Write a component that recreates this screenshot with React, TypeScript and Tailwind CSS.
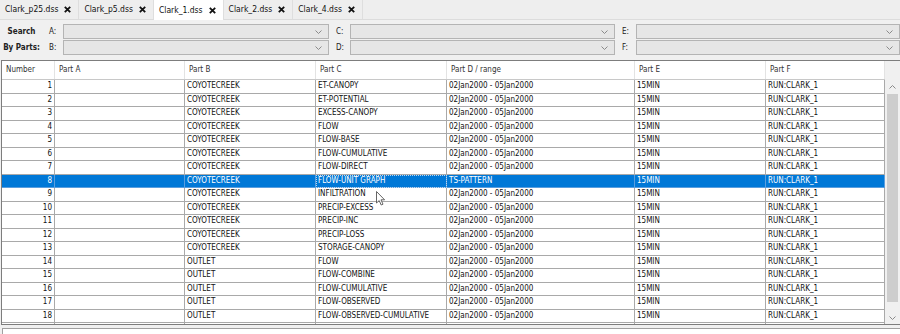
import React from 'react';

type Row = { b: string; c: string; d: string };

const tabs = ['Clark_p25.dss', 'Clark_p5.dss', 'Clark_1.dss', 'Clark_2.dss', 'Clark_4.dss'];
const activeTab = 2;

const RANGE = '02Jan2000 - 05Jan2000';

const rows: Row[] = [
  { b: 'COYOTECREEK', c: 'ET-CANOPY', d: RANGE },
  { b: 'COYOTECREEK', c: 'ET-POTENTIAL', d: RANGE },
  { b: 'COYOTECREEK', c: 'EXCESS-CANOPY', d: RANGE },
  { b: 'COYOTECREEK', c: 'FLOW', d: RANGE },
  { b: 'COYOTECREEK', c: 'FLOW-BASE', d: RANGE },
  { b: 'COYOTECREEK', c: 'FLOW-CUMULATIVE', d: RANGE },
  { b: 'COYOTECREEK', c: 'FLOW-DIRECT', d: RANGE },
  { b: 'COYOTECREEK', c: 'FLOW-UNIT GRAPH', d: 'TS-PATTERN' },
  { b: 'COYOTECREEK', c: 'INFILTRATION', d: RANGE },
  { b: 'COYOTECREEK', c: 'PRECIP-EXCESS', d: RANGE },
  { b: 'COYOTECREEK', c: 'PRECIP-INC', d: RANGE },
  { b: 'COYOTECREEK', c: 'PRECIP-LOSS', d: RANGE },
  { b: 'COYOTECREEK', c: 'STORAGE-CANOPY', d: RANGE },
  { b: 'OUTLET', c: 'FLOW', d: RANGE },
  { b: 'OUTLET', c: 'FLOW-COMBINE', d: RANGE },
  { b: 'OUTLET', c: 'FLOW-CUMULATIVE', d: RANGE },
  { b: 'OUTLET', c: 'FLOW-OBSERVED', d: RANGE },
  { b: 'OUTLET', c: 'FLOW-OBSERVED-CUMULATIVE', d: RANGE },
];

const selected = 7;

const headers = ['Number', 'Part A', 'Part B', 'Part C', 'Part D / range', 'Part E', 'Part F'];
const gridCols = 'grid grid-cols-[53px_130px_131px_131px_188px_131px_119px]';

function CloseX() {
  return (
    <svg width="7" height="7" viewBox="0 0 7 7" className="shrink-0">
      <path d="M0.8 0.8 L6.2 6.2 M6.2 0.8 L0.8 6.2" stroke="#111" strokeWidth="1.8" />
    </svg>
  );
}

function Chevron({ up = false }: { up?: boolean }) {
  return (
    <svg width="7" height="4" viewBox="0 0 7 4">
      <polyline
        points={up ? '0.5,3.5 3.5,0.5 6.5,3.5' : '0.5,0.5 3.5,3.5 6.5,0.5'}
        fill="none"
        stroke="#8a8a8a"
        strokeWidth="1"
      />
    </svg>
  );
}

function Combo({ label, width }: { label: string; width: string }) {
  return (
    <div className="flex items-center">
      <span className="w-[14px] text-[#222]">{label}</span>
      <div className={`${width} h-[15px] border border-[#b4b4b4] bg-[#e6e6e6] flex items-center justify-end pr-[6px]`}>
        <Chevron />
      </div>
    </div>
  );
}

function Cursor() {
  return (
    <svg width="10" height="15" viewBox="0 0 10 15" className="absolute left-[376px] top-[191px]">
      <path d="M0.5 0.5 L0.5 12 L3.2 9.6 L5.2 14 L7 13.2 L5 8.8 L8.6 8.8 Z" fill="#fff" stroke="#555" strokeWidth="0.9" />
    </svg>
  );
}

export default function App() {
  return (
    <div
      className="relative w-[900px] h-[334px] overflow-hidden bg-[#f0f0f0] text-[8px] leading-none text-[#111]"
      style={{ fontFamily: '"DejaVu Sans Condensed", "DejaVu Sans", sans-serif' }}
    >
      {/* tabs */}
      <div className="flex h-[20px] border-b border-[#dcdcdc] bg-[#eeeeee]">
        {tabs.map((t, i) => (
          <div
            key={t}
            className={`flex items-center gap-[6px] pl-[5px] pr-[7px] border-r border-[#dedede] ${
              i === activeTab ? 'bg-white h-[20px]' : ''
            }`}
          >
            <span className="text-[8.5px]">{t}</span>
            <CloseX />
          </div>
        ))}
      </div>

      {/* search by parts */}
      <div className="flex h-[40px] pt-[4px]">
        <div className="w-[50px] flex flex-col items-center pr-[6px] font-bold text-[#222]">
          <span className="h-[16px] flex items-center">Search</span>
          <span className="h-[16px] flex items-center">By Parts:</span>
        </div>
        <div className="flex flex-col gap-[1px]">
          <div className="flex gap-[7px]">
            <Combo label="A:" width="w-[266px]" />
            <Combo label="C:" width="w-[265px]" />
            <Combo label="E:" width="w-[264px]" />
          </div>
          <div className="flex gap-[7px]">
            <Combo label="B:" width="w-[266px]" />
            <Combo label="D:" width="w-[265px]" />
            <Combo label="F:" width="w-[264px]" />
          </div>
        </div>
      </div>

      {/* table */}
      <div className="flex ml-[1px] border-t border-l border-b border-[#7d7d7d] bg-white">
        <div className="w-[883px]">
          <div className={`${gridCols} h-[19px] border-b border-[#c8c8c8] bg-white text-[#333]`}>
            {headers.map((h) => (
              <div key={h} className="border-r border-[#e3e3e3] pl-[4px] flex items-center">
                {h}
              </div>
            ))}
          </div>
          <div className="h-[244px] overflow-hidden">
            {[...rows, { b: '', c: '', d: '' }].map((r, i) => {
              const sel = i === selected;
              const blank = i >= rows.length;
              const line = sel ? 'border-[#5a9ede]' : 'border-[#a9a9a9]';
              const cell = `h-[13.5px] border-r border-b ${line} flex items-center pl-[2px] whitespace-nowrap overflow-hidden`;
              return (
                <div key={i} className={`${gridCols} ${sel ? 'bg-[#0078d7] text-white' : ''}`}>
                  <div className={`${cell} justify-end pr-[2px]`}>{blank ? '' : i + 1}</div>
                  <div className={cell}></div>
                  <div className={cell}>{r.b}</div>
                  <div className={`${cell} ${sel ? 'outline outline-1 outline-dotted outline-[#bcd6ee] -outline-offset-1' : ''}`}>
                    {r.c}
                  </div>
                  <div className={cell}>{r.d}</div>
                  <div className={cell}>{blank ? '' : '15MIN'}</div>
                  <div className={cell}>{blank ? '' : 'RUN:CLARK_1'}</div>
                </div>
              );
            })}
          </div>
        </div>
        {/* scrollbar */}
        <div className="w-[16px] flex flex-col bg-[#f0f0f0]">
          <div className="h-[19px]" />
          <div className="h-[14px] flex items-center justify-center">
            <Chevron up />
          </div>
          <div className="mx-[2px] h-[208px] bg-[#cdcdcd]" />
          <div className="flex-1 flex items-end justify-center pb-[4px]">
            <Chevron />
          </div>
        </div>
      </div>

      {/* lower panel */}
      <div className="mt-[3px] ml-[2px] h-[20px] border-t border-l border-[#a0a0a0] bg-white" />

      <Cursor />
    </div>
  );
}
